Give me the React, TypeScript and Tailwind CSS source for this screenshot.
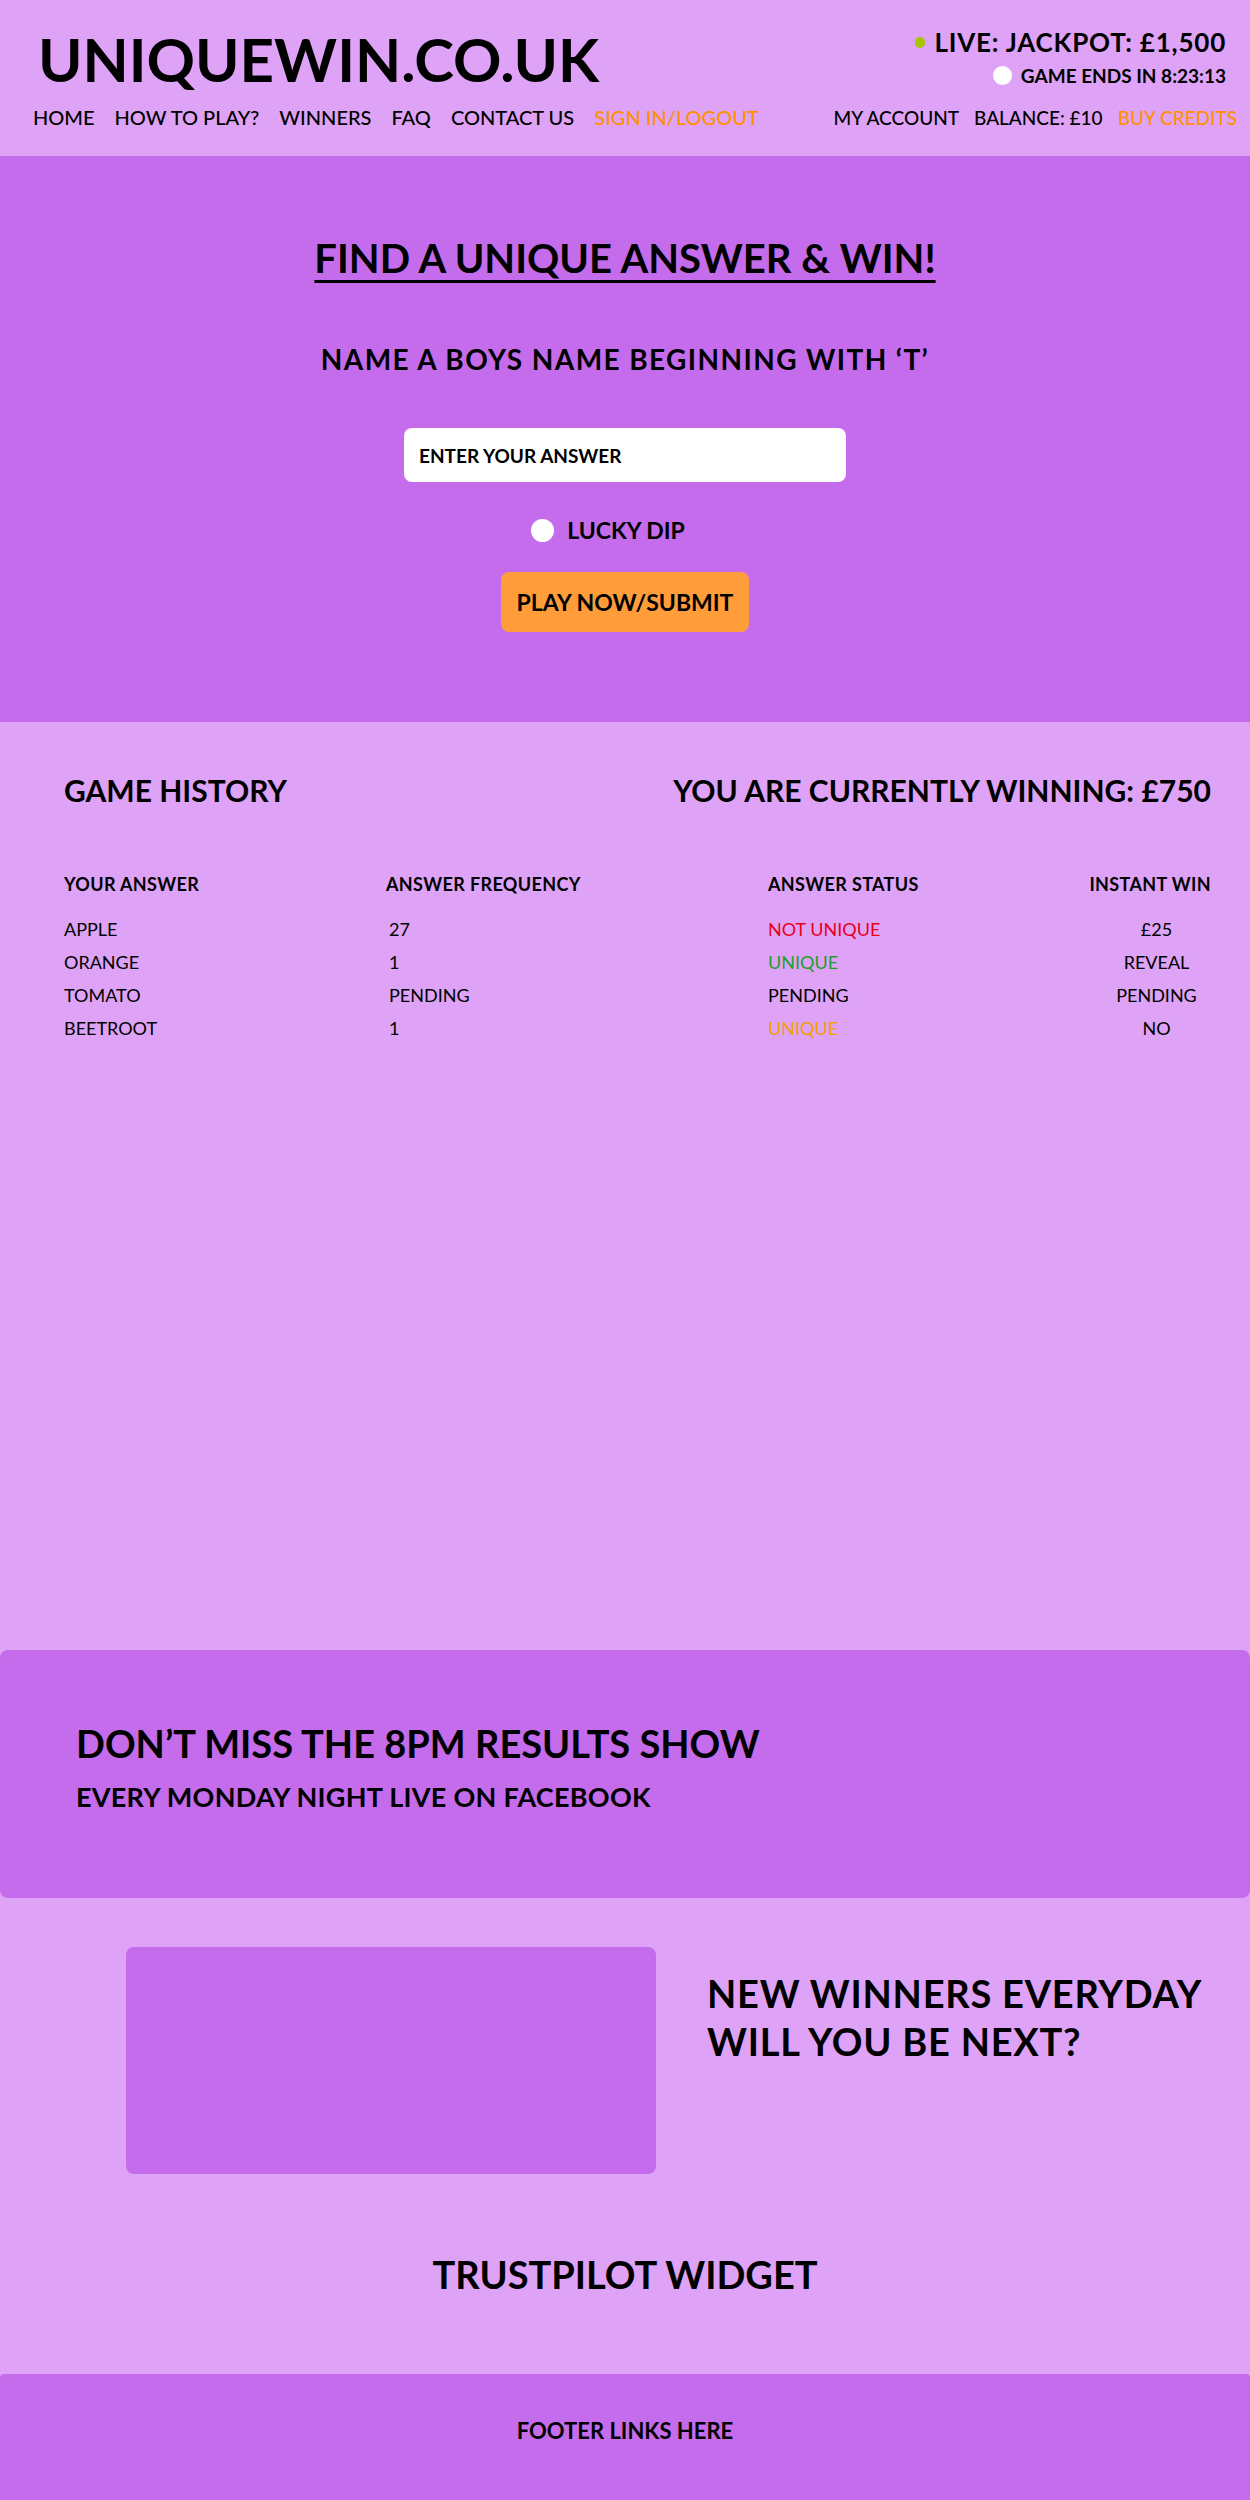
import React from "react";

const rows = [
  { answer: "APPLE", freq: "27", status: "NOT UNIQUE", color: "text-[#e8001c]", win: "£25" },
  { answer: "ORANGE", freq: "1", status: "UNIQUE", color: "text-[#1f9e2c]", win: "REVEAL" },
  { answer: "TOMATO", freq: "PENDING", status: "PENDING", color: "text-black", win: "PENDING" },
  { answer: "BEETROOT", freq: "1", status: "UNIQUE", color: "text-[#f0a100]", win: "NO" },
];

export default function App() {
  return (
    <div className="w-[1250px] bg-[#dea3f6] text-black font-['Lato',sans-serif]">
      {/* header */}
      <header className="h-[156px] flex justify-between">
        <div className="pl-[33px] pt-[29px]">
          <h1 className="ml-[5px] text-[60px] leading-none font-bold">UNIQUEWIN.CO.UK</h1>
          <nav className="mt-[18px] flex gap-[20px] text-[20px] leading-none font-medium">
            <a>HOME</a>
            <a>HOW TO PLAY?</a>
            <a>WINNERS</a>
            <a>FAQ</a>
            <a>CONTACT US</a>
            <a className="text-[#ff9100]">SIGN IN/LOGOUT</a>
          </nav>
        </div>
        <div className="pr-[13px] pt-[29px] flex flex-col items-end">
          <div className="pr-[11px] flex items-center gap-[10px] text-[26px] leading-none font-bold tracking-[0.03em]">
            <span className="w-[10px] h-[11px] rounded-full bg-[#a8c400]" />
            <span>LIVE: JACKPOT: £1,500</span>
          </div>
          <div className="pr-[11px] mt-[11px] flex items-center gap-[9px] text-[19px] leading-none font-bold">
            <span className="w-[19px] h-[19px] rounded-full bg-white" />
            <span>GAME ENDS IN 8:23:13</span>
          </div>
          <nav className="mt-[23px] flex gap-[15px] text-[19px] leading-none font-medium">
            <a>MY ACCOUNT</a>
            <a>BALANCE: £10</a>
            <a className="text-[#ff9100]">BUY CREDITS</a>
          </nav>
        </div>
      </header>

      {/* hero */}
      <section className="h-[566px] bg-[#c46cec] flex flex-col items-center pt-[82px]">
        <h2 className="text-[40px] leading-none font-bold underline decoration-[3px] underline-offset-[7px]">
          FIND A UNIQUE ANSWER &amp; WIN!
        </h2>
        <p className="mt-[67px] text-[28px] leading-none font-bold tracking-[0.05em]">NAME A BOYS NAME BEGINNING WITH ‘T’</p>
        <input
          className="mt-[55px] w-[442px] h-[54px] rounded-lg bg-white px-[15px] text-[19px] font-bold outline-none placeholder:text-black"
          placeholder="ENTER YOUR ANSWER"
        />
        <label className="mt-[37px] mr-[34px] flex items-center gap-[13px] text-[23px] leading-none font-bold">
          <span className="w-[23px] h-[23px] rounded-full bg-white" />
          LUCKY DIP
        </label>
        <button className="mt-[30px] w-[248px] h-[60px] rounded-lg bg-[#ff9d3b] text-[23px] font-bold">
          PLAY NOW/SUBMIT
        </button>
      </section>

      {/* game history */}
      <section className="h-[928px] pt-[53px] pl-[64px] pr-[39px]">
        <div className="flex justify-between text-[30px] leading-none font-bold">
          <h3>GAME HISTORY</h3>
          <p>YOU ARE CURRENTLY WINNING: £750</p>
        </div>
        <div className="mt-[70px] grid grid-cols-[322px_382px_1fr_115px] text-[18px] leading-none font-bold tracking-[0.02em] whitespace-nowrap">
          <span>YOUR ANSWER</span>
          <span>ANSWER FREQUENCY</span>
          <span>ANSWER STATUS</span>
          <span className="flex justify-end">INSTANT WIN</span>
        </div>
        <div className="mt-[20px]">
          {rows.map((r) => (
            <div key={r.answer} className="grid grid-cols-[322px_382px_1fr_115px] h-[33px] items-center text-[18px] leading-[33px]">
              <span>{r.answer}</span>
              <span className="pl-[3px]">{r.freq}</span>
              <span className={r.color}>{r.status}</span>
              <span className="text-center pl-[6px]">{r.win}</span>
            </div>
          ))}
        </div>
      </section>

      {/* results show banner */}
      <section className="h-[248px] rounded-lg bg-[#c46cec] pt-[74px] px-[76px]">
        <h3 className="text-[38px] leading-none font-bold">DON’T MISS THE 8PM RESULTS SHOW</h3>
        <p className="mt-[21px] text-[27px] leading-none font-bold tracking-[0.01em]">EVERY MONDAY NIGHT LIVE ON FACEBOOK</p>
      </section>

      {/* winners */}
      <section className="pt-[49px] pl-[126px] flex items-start gap-[51px]">
        <div className="w-[530px] h-[227px] rounded-lg bg-[#c46cec]" />
        <h3 className="mt-[22px] text-[38px] leading-[48px] font-bold tracking-[0.02em]">
          NEW WINNERS EVERYDAY
          <br />
          WILL YOU BE NEXT?
        </h3>
      </section>

      {/* trustpilot */}
      <section className="pt-[81px] pb-[81px] flex justify-center">
        <h3 className="text-[38px] leading-none font-bold">TRUSTPILOT WIDGET</h3>
      </section>

      {/* footer */}
      <footer className="h-[126px] rounded-t-sm bg-[#c46cec] pt-[46px] flex justify-center">
        <p className="text-[22px] leading-none font-bold">FOOTER LINKS HERE</p>
      </footer>
    </div>
  );
}
